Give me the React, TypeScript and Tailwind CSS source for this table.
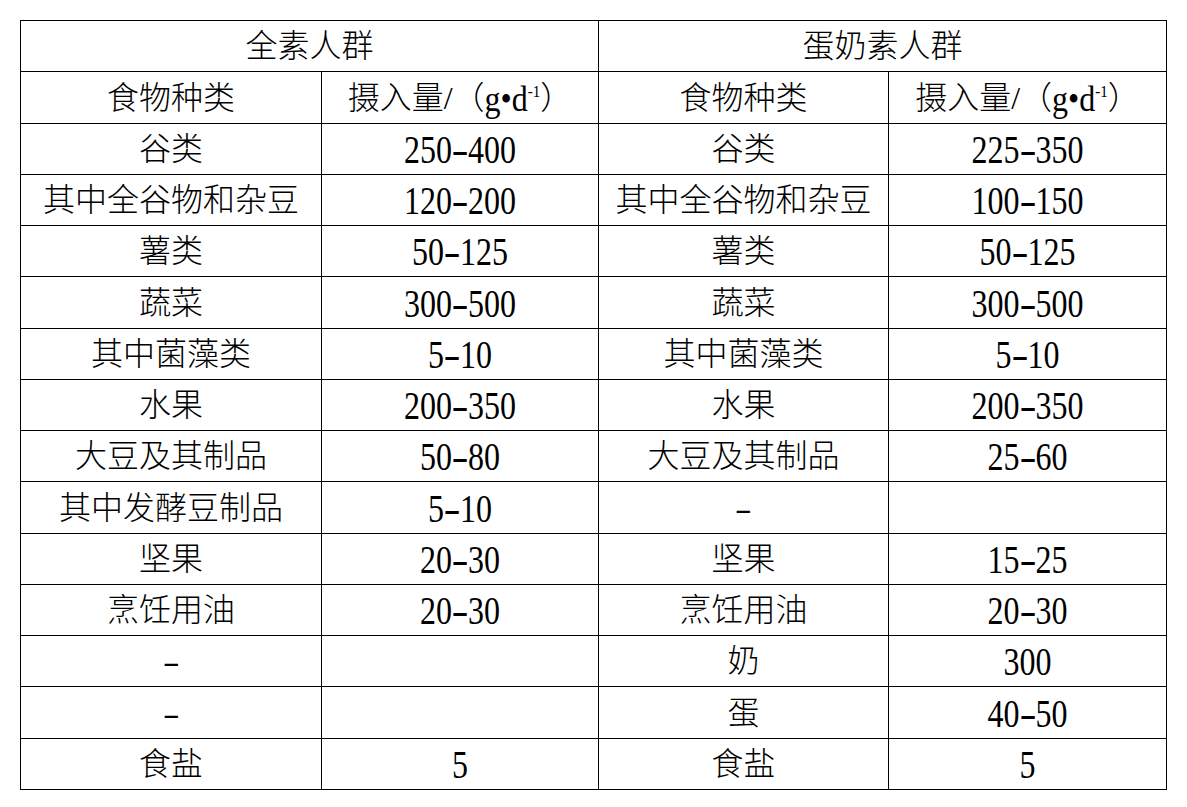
import React from "react";

const rows: [string, string, string, string][] = [
  ["谷类", "250-400", "谷类", "225-350"],
  ["其中全谷物和杂豆", "120-200", "其中全谷物和杂豆", "100-150"],
  ["薯类", "50-125", "薯类", "50-125"],
  ["蔬菜", "300-500", "蔬菜", "300-500"],
  ["其中菌藻类", "5-10", "其中菌藻类", "5-10"],
  ["水果", "200-350", "水果", "200-350"],
  ["大豆及其制品", "50-80", "大豆及其制品", "25-60"],
  ["其中发酵豆制品", "5-10", "-", ""],
  ["坚果", "20-30", "坚果", "15-25"],
  ["烹饪用油", "20-30", "烹饪用油", "20-30"],
  ["-", "", "奶", "300"],
  ["-", "", "蛋", "40-50"],
  ["食盐", "5", "食盐", "5"],
];

function Cell({ children, span }: { children?: React.ReactNode; span?: boolean }) {
  return (
    <div
      className={
        "bg-white flex items-center justify-center whitespace-nowrap leading-none " +
        (span ? "col-span-2" : "")
      }
    >
      {children}
    </div>
  );
}

function Num({ value }: { value: string }) {
  if (!value) return null;
  const parts = value.split("-");
  return (
    <span className="inline-block scale-y-[1.25] font-light">
      {parts.map((p, i) => (
        <React.Fragment key={i}>
          {i > 0 && <span className="inline-block w-[16px] text-center scale-x-[1.6]">-</span>}
          {p}
        </React.Fragment>
      ))}
    </span>
  );
}

function Intake() {
  return (
    <span>
      摄入量/（
      <span className="inline-block scale-y-[1.15]">
        g•d<span className="relative -top-[12px] text-[15px]">-1</span>
      </span>
      ）
    </span>
  );
}

export default function App() {
  return (
    <div className="min-h-[807px] w-[1187px] bg-white pt-[20px] pl-[20px]">
      <div
        className="grid w-[1147px] bg-black p-px gap-px text-black text-[32px] font-light grid-cols-[300px_276px_289px_277px] grid-rows-[50px_51px_50px_50px_50px_51px_50px_50px_50px_51px_50px_50px_50px_51px_50px]"
        style={{ fontFamily: '"Liberation Serif", "Noto Sans CJK SC", serif' }}
      >
        <Cell span>全素人群</Cell>
        <Cell span>蛋奶素人群</Cell>
        <Cell>食物种类</Cell>
        <Cell>
          <Intake />
        </Cell>
        <Cell>食物种类</Cell>
        <Cell>
          <Intake />
        </Cell>
        {rows.map((r, i) => (
          <React.Fragment key={i}>
            <Cell>{r[0] === "-" ? <Num value="" /> : null}{r[0] === "-" ? <span className="inline-block scale-x-[1.6]">-</span> : r[0]}</Cell>
            <Cell>
              <Num value={r[1]} />
            </Cell>
            <Cell>{r[2] === "-" ? <span className="inline-block scale-x-[1.6]">-</span> : r[2]}</Cell>
            <Cell>
              <Num value={r[3]} />
            </Cell>
          </React.Fragment>
        ))}
      </div>
    </div>
  );
}
